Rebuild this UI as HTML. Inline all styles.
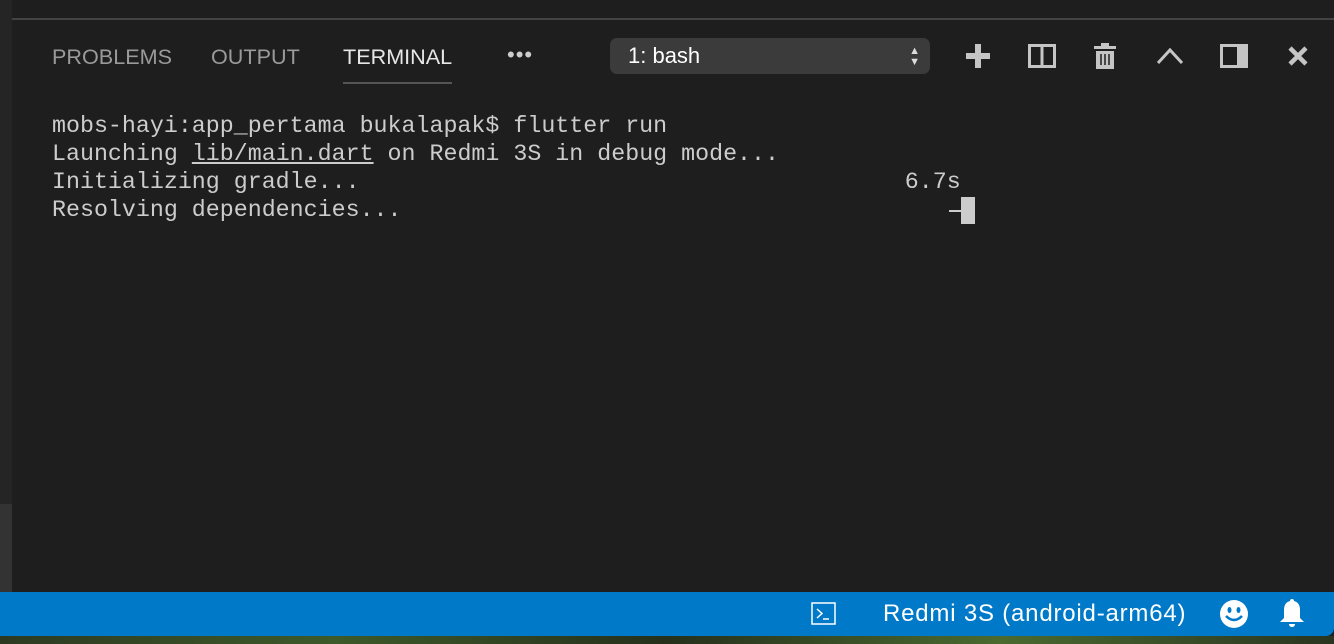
<!DOCTYPE html>
<html><head><meta charset="utf-8"><style>
*{margin:0;padding:0;box-sizing:border-box}
body{width:1334px;height:644px;background:#1e1e1e;position:relative;overflow:hidden;font-family:"Liberation Sans",sans-serif}
.strip{position:absolute;left:0;top:0;width:12px;height:592px;background:#252525}
.sb{position:absolute;left:0;top:504px;width:12px;height:88px;background:#333}
.line{position:absolute;left:12px;right:0;top:18px;height:2px;background:#434343}
.tab{position:absolute;top:44px;font-size:21.6px;color:#9a9a9a;letter-spacing:0}
.sel{position:absolute;left:610px;top:38px;width:320px;height:36px;background:#3b3b3b;border-radius:7px;color:#fff;font-size:22px;padding:5px 0 0 18px}
.term{position:absolute;left:52px;top:112px;font-family:"Liberation Mono",monospace;font-size:23.3px;line-height:28px;color:#cccccc;white-space:pre}
.status{position:absolute;left:0;top:592px;width:1334px;height:44px;background:#0079c9;border-bottom-right-radius:8px}
.bot{position:absolute;left:0;top:636px;width:1334px;height:8px;background:linear-gradient(90deg,#2d3a22,#3d5a2a,#26301c,#4a6a30,#2a3520)}
svg{position:absolute}
</style></head><body>
<div class="bot"></div>
<div class="strip"></div><div class="sb"></div>
<div class="line"></div>
<div class="tab" style="left:52px">PROBLEMS</div>
<div class="tab" style="left:211px">OUTPUT</div>
<div class="tab" style="left:343px;color:#e7e7e7">TERMINAL</div>
<div style="position:absolute;left:343px;top:82px;width:109px;height:2px;background:#555"></div>
<div class="tab" style="left:507px;top:42px;color:#ccc;font-size:22px;letter-spacing:1px">•••</div>
<div class="sel">1: bash<span style="position:absolute;right:10px;top:8px;font-size:11px;line-height:11px;color:#ddd">▲<br>▼</span></div>
<svg style="left:966px;top:44px" width="24" height="24"><path d="M9 0h6v9h9v6h-9v9h-6v-9h-9v-6h9z" fill="#c5c5c5"/></svg>
<svg style="left:1028px;top:44px" width="28" height="24"><path d="M1.5 1.5h25v21h-25zM14 1.5v21" stroke="#c5c5c5" stroke-width="3" fill="none"/></svg>
<svg style="left:1094px;top:42px" width="22" height="28"><path d="M7 1h8v3h7v3h-22v-3h7z" fill="#c5c5c5"/><path d="M2 9h18v18h-18z" fill="#c5c5c5"/><path d="M7 12v11M11 12v11M15 12v11" stroke="#1e1e1e" stroke-width="1.5"/></svg>
<svg style="left:1156px;top:46px" width="28" height="20"><path d="M2 17L14 4L26 17" stroke="#c5c5c5" stroke-width="3" fill="none"/></svg>
<svg style="left:1220px;top:44px" width="28" height="24"><rect x="1.5" y="1.5" width="25" height="21" stroke="#c5c5c5" stroke-width="3" fill="none"/><rect x="17" y="1" width="11" height="23" fill="#c5c5c5"/></svg>
<svg style="left:1288px;top:46px" width="20" height="20"><path d="M2 2L18 18M18 2L2 18" stroke="#c5c5c5" stroke-width="4.5"/></svg>
<div class="term">mobs-hayi:app_pertama bukalapak$ flutter run
Launching <span style="text-decoration:underline">lib/main.dart</span> on Redmi 3S in debug mode...
Initializing gradle...                                       6.7s
Resolving dependencies...</div>
<div style="position:absolute;left:949px;top:210px;width:12px;height:2px;background:#ccc"></div>
<div style="position:absolute;left:961px;top:197px;width:14px;height:27px;background:#ccc"></div>
<div class="status">
<svg style="left:811px;top:10px" width="26" height="24"><rect x="1" y="1" width="23" height="21" stroke="#fff" stroke-width="1.5" fill="none"/><path d="M6 7l5 4.5l-5 4.5M12 17h6" stroke="#fff" stroke-width="1.5" fill="none"/></svg>
<div style="position:absolute;left:883px;top:8px;color:#fff;font-size:24px;letter-spacing:0.8px">Redmi 3S (android-arm64)</div>
<svg style="left:1219px;top:7px" width="30" height="30"><circle cx="15" cy="15" r="14" fill="#fff"/><ellipse cx="10.5" cy="11" rx="2" ry="3" fill="#0079c9"/><ellipse cx="19.5" cy="11" rx="2" ry="3" fill="#0079c9"/><path d="M7 17q8 8 16 0" stroke="#0079c9" stroke-width="2.5" fill="none"/></svg>
<svg style="left:1278px;top:6px" width="28" height="32"><path d="M14 1c-1.5 0-2 1-2 2c-4 1-6 4-6 9v8l-4 4h24l-4-4v-8c0-5-2-8-6-9c0-1-.5-2-2-2z" fill="#fff"/><path d="M11 26h6c0 2-1.5 3-3 3s-3-1-3-3z" fill="#fff"/></svg>
</div>
</body></html>
